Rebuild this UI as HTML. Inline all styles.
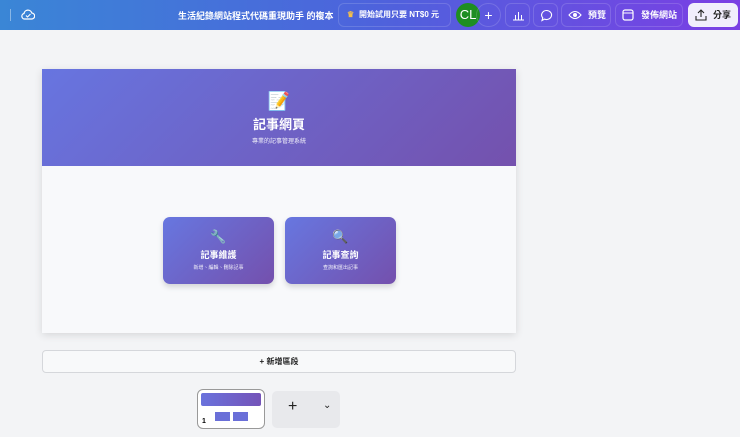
<!DOCTYPE html>
<html><head><meta charset="utf-8"><style>
*{box-sizing:border-box;margin:0;padding:0}
body{width:740px;height:437px;background:#f3f4f6;font-family:"Liberation Sans","Noto Sans CJK TC",sans-serif;position:relative;overflow:hidden}
.top{position:absolute;left:0;top:0;width:740px;height:30px;background:linear-gradient(90deg,#3a86d6 0%,#4d63dc 50%,#7b3fe4 100%);color:#fff;white-space:nowrap}
.top *{position:absolute}
.btn{top:3px;height:24px;border:1px solid rgba(255,255,255,.15);border-radius:6px;font-size:9px;font-weight:bold;line-height:22px;color:#fff}
.page{position:absolute;left:42px;top:69px;width:474px;height:264px;background:#f8f9fb;box-shadow:0 2px 8px rgba(0,0,0,.12)}
.hero{height:97px;background:linear-gradient(135deg,#6775e0,#7451ad);color:#fff;text-align:center}
.card{position:absolute;top:148px;width:111px;height:67px;border-radius:7px;background:linear-gradient(135deg,#6777e0,#7450ad);color:#fff;text-align:center;box-shadow:0 3px 6px rgba(0,0,0,.15)}
.card b{display:block;font-size:9px;margin-top:3px}
.card i{display:block;font-style:normal;font-size:5px;margin-top:3px;opacity:.9}
</style></head><body>
<div class="top">
 <div style="left:10px;top:9px;width:1px;height:12px;background:rgba(255,255,255,.4)"></div>
 <svg style="left:21px;top:8px" width="14" height="13" viewBox="0 0 14 13"><path d="M4 11h6.5a3 3 0 0 0 .3-6A4 4 0 0 0 3 5.5 2.8 2.8 0 0 0 4 11z" fill="none" stroke="#fff" stroke-width="1.2"/><path d="M5 7.5l1.5 1.5 3-3" fill="none" stroke="#fff" stroke-width="1.1"/></svg>
 <div style="left:178px;top:9px;font-size:9px;font-weight:bold">生活紀錄網站程式代碼重現助手 的複本</div>
 <div class="btn" style="left:338px;width:113px;padding-left:20px;font-size:8px"><span style="left:8px;top:0;color:#f5c04a;font-size:8px">♛</span>開始試用只要 NT$0 元</div>
 <div style="left:456px;top:3px;width:24px;height:24px;border-radius:12px;background:#1e8e22;font-size:13px;line-height:24px;text-align:center">CL</div>
 <div class="btn" style="left:476px;width:25px;text-align:center;font-size:14px;border-radius:12px;font-weight:normal">+</div>
 <div class="btn" style="left:505px;width:25px"><svg style="left:6px;top:5px" width="13" height="12"><path d="M1 11h11M6.5 3v8M3.5 6v5M9.5 6v5" stroke="#fff" stroke-width="1"/></svg></div>
 <div class="btn" style="left:533px;width:25px"><svg style="left:6px;top:5px" width="13" height="13"><path d="M6.5 1.5a5 4.5 0 1 1-2 8.6L2 11.5l.8-2.6A5 4.5 0 0 1 6.5 1.5z" fill="none" stroke="#fff" stroke-width="1.1"/></svg></div>
 <div class="btn" style="left:561px;width:50px;padding-left:26px"><svg style="left:6px;top:6px" width="14" height="10"><path d="M1 5Q7-2 13 5Q7 12 1 5z" fill="none" stroke="#fff" stroke-width="1.1"/><circle cx="7" cy="5" r="2" fill="#fff"/></svg>預覽</div>
 <div class="btn" style="left:615px;width:68px;padding-left:25px"><svg style="left:6px;top:5px" width="12" height="12"><rect x="1" y="1" width="10" height="10" rx="2" fill="none" stroke="#fff" stroke-width="1.2"/><path d="M1 4h10" stroke="#fff"/></svg>發佈網站</div>
 <div class="btn" style="left:688px;width:50px;background:#f1eefc;color:#222;padding-left:24px"><svg style="left:6px;top:5px" width="12" height="12"><path d="M6 1v7M3 4l3-3 3 3M1 7v4h10V7" fill="none" stroke="#222" stroke-width="1.1"/></svg>分享</div>
</div>
<div class="page">
 <div class="hero">
  <div style="padding-top:22px;font-size:18px">📝</div>
  <div style="font-size:13px;font-weight:bold;margin-top:2px">記事網頁</div>
  <div style="font-size:6px;margin-top:3px;opacity:.9">專業的記事管理系統</div>
 </div>
 <div class="card" style="left:121px"><div style="font-size:13px;margin-top:12px">🔧</div><b>記事維護</b><i>新增、編輯、刪除記事</i></div>
 <div class="card" style="left:243px"><div style="font-size:13px;margin-top:12px">🔍</div><b>記事查詢</b><i>查詢和匯出記事</i></div>
</div>
<div style="position:absolute;left:42px;top:350px;width:474px;height:23px;border:1px solid #d5d7db;border-radius:4px;background:#f8f9fa;text-align:center;font-size:8px;font-weight:bold;line-height:21px;color:#222">+ 新增區段</div>
<div style="position:absolute;left:197px;top:389px;width:68px;height:40px;border:1.5px solid #999;border-radius:6px;background:#fff;overflow:hidden">
 <div style="margin:3px 3px 0;height:13px;background:linear-gradient(90deg,#6a72dc,#7453b8);border-radius:2px"></div>
 <div style="position:absolute;left:17px;top:22px;width:15px;height:9px;background:#6a6fd8"></div>
 <div style="position:absolute;left:35px;top:22px;width:15px;height:9px;background:#6a6fd8"></div>
 <div style="position:absolute;left:4px;top:28px;font-size:7px;font-weight:bold">1</div>
</div>
<div style="position:absolute;left:272px;top:391px;width:68px;height:37px;background:#e8e9ec;border-radius:5px;font-size:16px;color:#222"><span style="position:absolute;left:16px;top:7px">+</span><span style="position:absolute;left:51px;top:9px;font-size:10px">⌄</span></div>
</body></html>
